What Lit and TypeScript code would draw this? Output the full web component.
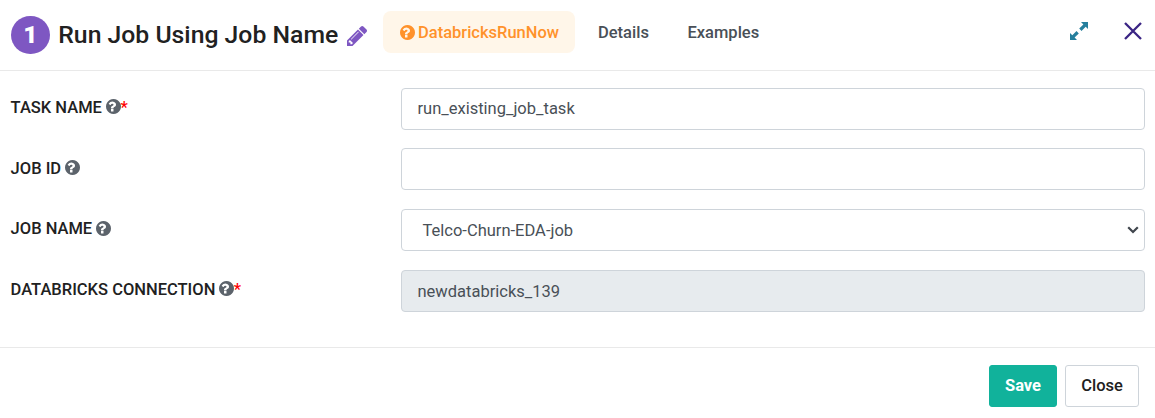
import { LitElement, html, css } from "lit";
import { customElement } from "lit/decorators.js";

const helpIcon = html`<svg class="help" viewBox="128 128 1536 1536" aria-hidden="true"><path fill="currentColor" d="M896 1376v-192q0-14-9-23t-23-9h-192q-14 0-23 9t-9 23v192q0 14 9 23t23 9h192q14 0 23-9t9-23zm256-672q0-88-55.500-163t-138.500-116-170-41q-243 0-371 213-15 24 8 42l132 100q7 6 19 6 16 0 25-12 53-68 86-92 34-24 86-24 48 0 85.500 26t37.500 59q0 38-20 61t-68 45q-63 28-115.500 86.500t-52.500 125.500v36q0 14 9 23t23 9h192q14 0 23-9t9-23q0-19 21.500-49.500t54.500-49.500q32-18 49-28.500t46-35 44.500-48 28-60.500 12.500-81zm512 192q0 209-103 385.500t-279.500 279.500-385.500 103-385.500-103-279.500-279.500-103-385.500 103-385.500 279.500-279.500 385.500-103 385.500 103 279.500 279.500 103 385.500z"/></svg>`;

@customElement("app-root")
export class AppRoot extends LitElement {
  static styles = css`
    :host { display: flex; flex-direction: column; width: 1155px; height: 418px; background: #fff; font: 400 16.5px/26px Roboto, sans-serif; color: #212529; overflow: hidden; box-sizing: border-box; }
    * { box-sizing: border-box; }
    header { display: flex; height: 71px; flex: none; border-bottom: 1px solid #e9e9e9; padding-left: 11px; }
    .step { width: 39px; height: 38.500px; margin-top: 15.500px; border-radius: 50%; background: #7e57c2; color: #fff; font-size: 24.75px; font-weight: 900; line-height: 38px; text-align: center; }
    h1 { margin: 19px 0 0 8.300px; width: 287.700px; font-size: 24.75px; line-height: 32px; font-weight: 500; white-space: nowrap; color: #212121; }
    .pencil { width: 20px; height: 20px; margin-top: 26px; margin-left: 1px; color: #7e57c2; flex: none; }
    nav { display: flex; margin: 11px 0 0 16px; height: 42px; line-height: 42px; font-weight: 500; color: #495057; white-space: nowrap; }
    .tab { padding: 0 16px; }
    .tab span { display: block; padding-top: 1px; line-height: 42px; }
    .on { display: flex; align-items: center; width: 192px; border-radius: 8px; background: #fff6e9; color: #ff922b; margin-right: 7px; padding-left: 16.900px; }
    .on span { padding-top: 2px; }
    .on .help { margin: 0 3.100px 0 0; }
    .help { width: 15px; height: 15px; flex: none; }
    .second { width: 89.500px; }
    .actions { margin-left: auto; display: flex; padding: 22px 13.500px 0 0; gap: 35.500px; }
    .actions svg { width: 18px; height: 18px; }
    main { padding: 16.700px 10px 0 10.600px; height: 276px; flex: none; display: flex; flex-direction: column; }
    .row { display: grid; grid-template-columns: 390.400px 1fr; height: 60.65px; flex: none; }
    label { display: flex; align-items: center; height: 38.400px; font-weight: 500; color: #212121; white-space: nowrap; }
    label span { padding-top: 2.200px; }
    label .help { color: #5c636b; margin-left: 4px; }
    label .star { color: #f00; margin-left: -0.500px; }
    .field { height: 42px; border: 1px solid #ced4da; border-radius: 4px; line-height: 26px; padding: 0 15.500px; color: #495057; display: flex; align-items: center; }
    .field span { padding-top: 0.900px; }
    .select { padding: 0 5px 0 20.500px; justify-content: space-between; }
    .select span, .disabled span { padding-top: 2.200px; }
    .chev { width: 12px; height: 8px; margin-top: 1px; }
    .disabled { background: #e7ebee; }
    footer { flex: 1; border-top: 1px solid #e9e9e9; display: flex; justify-content: flex-end; gap: 8px; padding: 17px 16px 0 0; }
    button { height: 42px; border: 1px solid #ced4da; border-radius: 3px; background: #fff; font: 500 16.5px/38px Roboto, sans-serif; padding: 0 0 1px; width: 74px; color: #212121; }
    .save { width: 68px; background: #11b29b; border-color: #11b29b; color: #fff; font-weight: 700; }
  `;

  private row(name: string, required: boolean, value: string, kind = "") {
    return html`<div class="row">
      <label><span>${name}</span>${helpIcon}${required ? html`<span class="star">*</span>` : ""}</label>
      <div class="field ${kind}"><span>${value}</span>${kind === "select"
        ? html`<svg class="chev" viewBox="0 0 12 8"><path d="M1.200 1.200L6 6l4.800-4.800" fill="none" stroke="#40464d" stroke-width="2.200"/></svg>` : ""}</div>
    </div>`;
  }

  render() {
    return html`
      <header>
        <div class="step">1</div>
        <h1><span>Run Job Using Job Name</span></h1>
        <svg class="pencil" viewBox="128 149 1515 1515"><path fill="currentColor" d="M491 1536l91-91-235-235-91 91v107h128v128h107zm523-928q0-22-22-22-10 0-17 7l-542 542q-7 7-7 17 0 22 22 22 10 0 17-7l542-542q7-7 7-17zm-54-192l416 416-832 832h-416v-416zm683 96q0 53-37 90l-166 166-416-416 166-165q36-38 90-38 53 0 91 38l235 234q37 39 37 91z"/></svg>
        <nav>
          <div class="tab on">${helpIcon}<span>DatabricksRunNow</span></div>
          <div class="tab second"><span>Details</span></div>
          <div class="tab"><span>Examples</span></div>
        </nav>
        <div class="actions">
          <svg viewBox="0 0 18 18"><g fill="#267f9d"><path d="M11 0h7v7l-2.300-2.300-4.200 4.200-2.300-2.300 4.200-4.200z"/><path d="M7 18H0v-7l2.300 2.300 4.200-4.200 2.300 2.300-4.200 4.200z"/></g></svg>
          <svg viewBox="0 0 18 18"><path d="M1 1l16 16M17 1L1 17" stroke="#3a2484" stroke-width="2.300"/></svg>
        </div>
      </header>
      <main>
        ${this.row("TASK NAME", true, "run_existing_job_task")}
        ${this.row("JOB ID", false, "")}
        ${this.row("JOB NAME", false, "Telco-Churn-EDA-job", "select")}
        ${this.row("DATABRICKS CONNECTION", true, "newdatabricks_139", "disabled")}
      </main>
      <footer><button class="save">Save</button><button>Close</button></footer>`;
  }
}
